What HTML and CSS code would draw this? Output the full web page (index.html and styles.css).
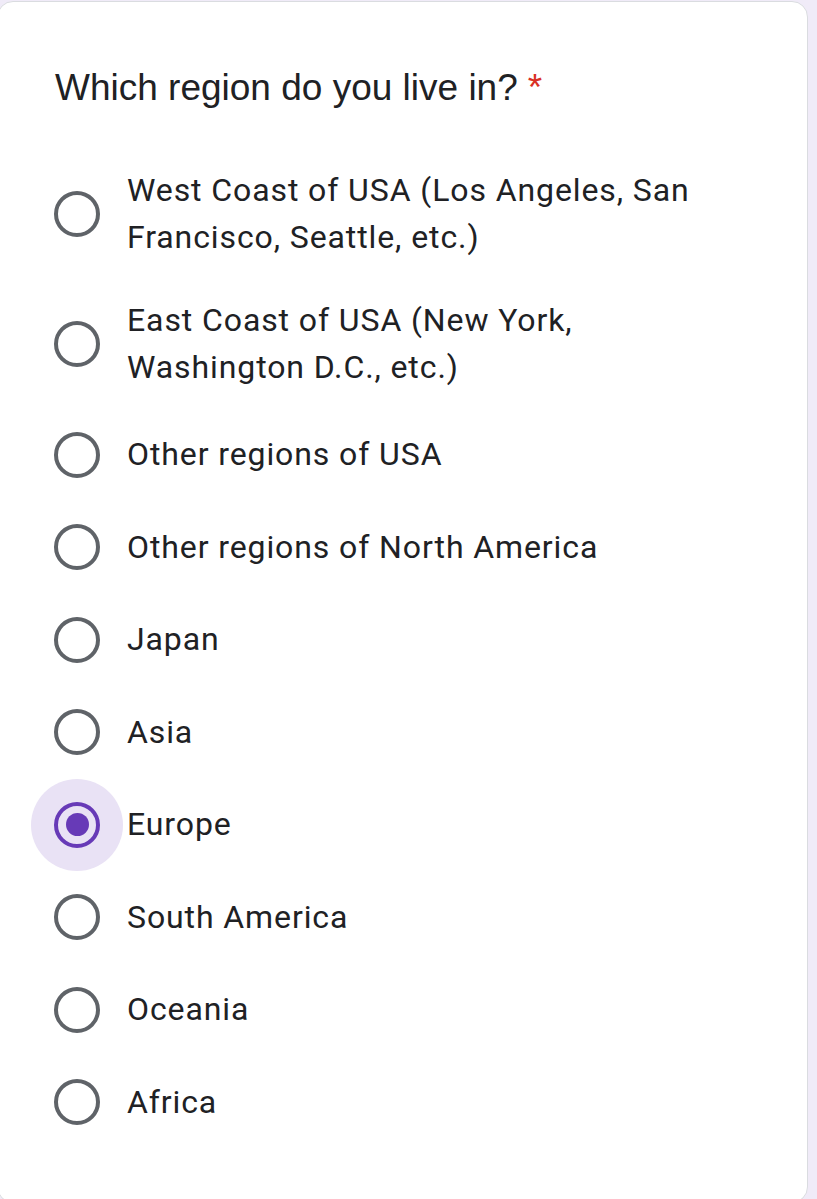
FILE: index.html
```html
<!DOCTYPE html>
<html lang="en">
<head>
    <meta charset="UTF-8">
    <meta name="viewport" content="width=device-width, initial-scale=1.0">
    <title>Which region do you live in?</title>
    <link rel="stylesheet" href="styles.css">
</head>
<body>
    <div class="card">
        <div class="question">Which region do you live in?<span class="required">*</span></div>
        <div class="options">
            <div class="option tall">
                <span class="radio"><span class="ring"></span></span>
                <span class="label">West Coast of USA (Los Angeles, San Francisco, Seattle, etc.)</span>
            </div>
            <div class="option tall">
                <span class="radio"><span class="ring"></span></span>
                <span class="label">East Coast of USA (New York, Washington D.C., etc.)</span>
            </div>
            <div class="option">
                <span class="radio"><span class="ring"></span></span>
                <span class="label">Other regions of USA</span>
            </div>
            <div class="option">
                <span class="radio"><span class="ring"></span></span>
                <span class="label">Other regions of North America</span>
            </div>
            <div class="option">
                <span class="radio"><span class="ring"></span></span>
                <span class="label">Japan</span>
            </div>
            <div class="option">
                <span class="radio"><span class="ring"></span></span>
                <span class="label">Asia</span>
            </div>
            <div class="option checked">
                <span class="radio"><span class="ring"><span class="dot"></span></span></span>
                <span class="label">Europe</span>
            </div>
            <div class="option">
                <span class="radio"><span class="ring"></span></span>
                <span class="label">South America</span>
            </div>
            <div class="option">
                <span class="radio"><span class="ring"></span></span>
                <span class="label">Oceania</span>
            </div>
            <div class="option">
                <span class="radio"><span class="ring"></span></span>
                <span class="label">Africa</span>
            </div>
        </div>
    </div>
</body>
</html>
```

FILE: styles.css
```css
* {
    margin: 0;
    padding: 0;
    box-sizing: border-box;
}

body {
    background: #f0ebf8;
    overflow: hidden;
}

.card {
    background: white;
    border: 1px solid #dadce0;
    border-radius: 16px;
    margin: 1px 0 0 -3px;
    width: 811px;
    height: 1202px;
    padding: 64px 80px 0 57px;
}

.question {
    font-family: "Liberation Sans", Arial, sans-serif;
    font-size: 37px;
    line-height: 44px;
    color: #202124;
}

.required {
    color: #d93025;
    margin-left: 10px;
}

.options {
    margin-top: 38.5px;
    margin-left: -24px;
}

.option {
    display: flex;
    align-items: center;
    min-height: 92.5px;
}

.option.tall {
    padding: 18px 0;
}

.radio {
    flex: none;
    width: 92px;
    height: 92px;
    border-radius: 50%;
    display: flex;
    align-items: center;
    justify-content: center;
}

.ring {
    width: 46px;
    height: 46px;
    border: 4.5px solid #5f6368;
    border-radius: 50%;
    display: flex;
    align-items: center;
    justify-content: center;
}

.checked .radio {
    background: #e9e2f5;
}

.checked .ring {
    border-color: #673ab7;
}

.dot {
    width: 23px;
    height: 23px;
    border-radius: 50%;
    background: #673ab7;
}

.label {
    font-family: Roboto, "Noto Sans", sans-serif;
    font-size: 32px;
    letter-spacing: 0.9px;
    line-height: 47px;
    color: #202124;
    margin-left: 4px;
    max-width: 600px;
}
```
